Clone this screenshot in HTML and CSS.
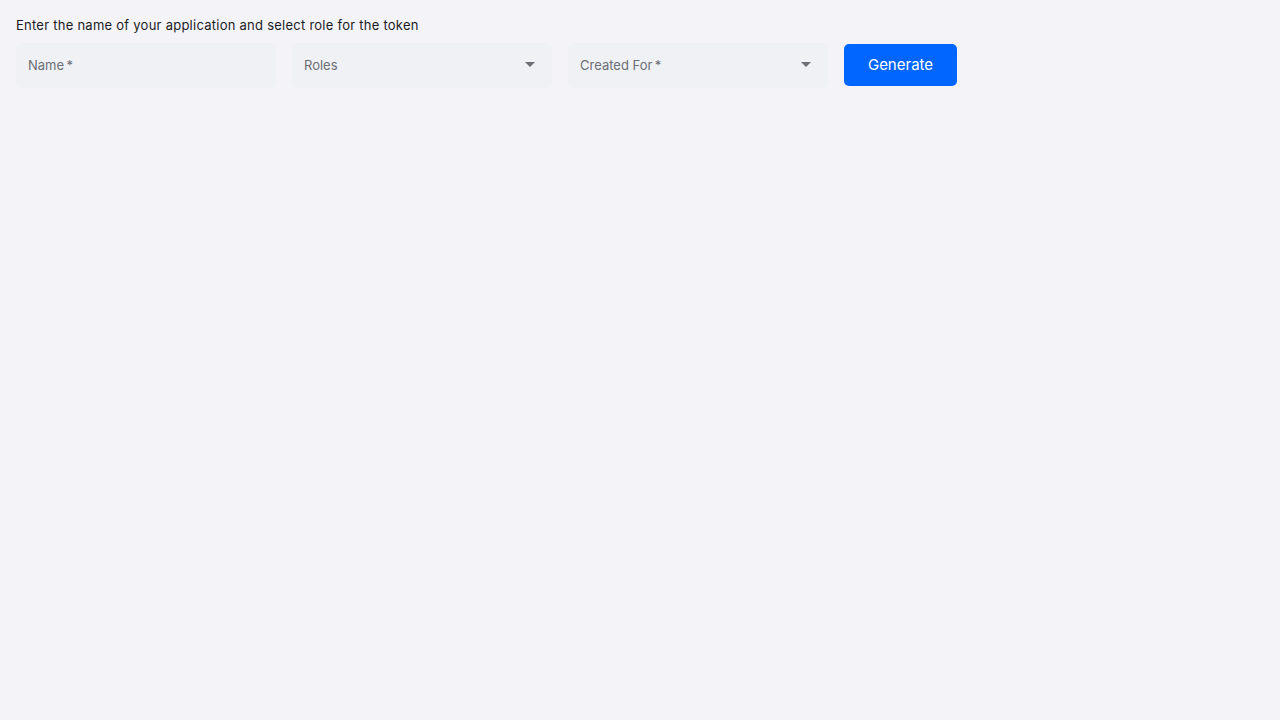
FILE: index.html
```html
<!DOCTYPE html>
<html>
<head>
<meta charset="utf-8">
<link rel="stylesheet" href="styles.css">
</head>
<body>
<div class="page">
  <p class="intro">Enter the name of your application and select role for the token</p>
  <div class="form-row">
    <div class="field"><span class="label">Name&thinsp;*</span></div>
    <div class="field select"><span class="label">Roles</span><span class="caret"></span></div>
    <div class="field select"><span class="label">Created For&thinsp;*</span><span class="caret"></span></div>
    <button class="btn">Generate</button>
  </div>
</div>
</body>
</html>
```
FILE: styles.css
```css
html, body {
  margin: 0;
  padding: 0;
  background: #f4f4f8;
  font-family: Inter, "Noto Sans", sans-serif;
}
.page {
  padding: 16px 16px;
}
.intro {
  margin: 0 0 9px 0;
  font-size: 13px;
  line-height: 18px;
  letter-spacing: 0.25px;
  color: #1b1b1f;
}
.form-row {
  display: flex;
  align-items: flex-start;
  gap: 16px;
}
.field {
  width: 260px;
  height: 45px;
  box-sizing: border-box;
  background: #f0f1f4;
  border-radius: 5px;
  display: flex;
  align-items: center;
  justify-content: space-between;
  padding: 0 17px 2px 12px;
}
.label {
  font-size: 13px;
  color: #6b6e75;
}
.caret {
  width: 0;
  height: 0;
  border-left: 5px solid transparent;
  border-right: 5px solid transparent;
  border-top: 5px solid #6b6e75;
}
.btn {
  margin-top: 1px;
  width: 113px;
  height: 42px;
  border: none;
  border-radius: 5px;
  background: #0066ff;
  color: #ffffff;
  font-family: Inter, "Noto Sans", sans-serif;
  font-size: 15px;
  padding: 0 0 2px 0;
}
```
